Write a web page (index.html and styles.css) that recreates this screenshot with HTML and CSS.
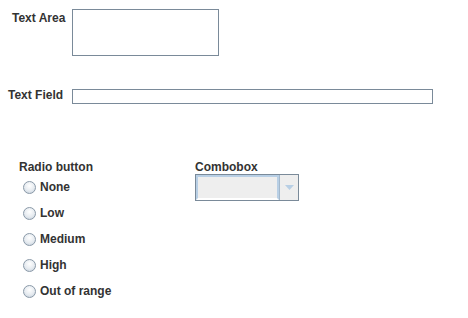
FILE: index.html
```html
<!DOCTYPE html>
<html lang="en">
<head>
    <meta charset="UTF-8">
    <title>Form Demo</title>
    <link rel="stylesheet" href="styles.css">
</head>
<body>
    <div class="form">
        <div class="row area-row">
            <label class="lbl">Text Area</label>
            <div class="textarea"></div>
        </div>

        <div class="row field-row">
            <label class="lbl">Text Field</label>
            <div class="textfield"></div>
        </div>

        <div class="groups">
            <div class="radio-group">
                <div class="group-title">Radio button</div>
                <label class="radio"><span class="dot"></span>None</label>
                <label class="radio"><span class="dot"></span>Low</label>
                <label class="radio"><span class="dot"></span>Medium</label>
                <label class="radio"><span class="dot"></span>High</label>
                <label class="radio"><span class="dot"></span>Out of range</label>
            </div>

            <div class="combo-group">
                <div class="group-title">Combobox</div>
                <div class="combo">
                    <div class="combo-field"></div>
                    <div class="combo-btn">
                        <svg width="9" height="5" viewBox="0 0 9 5">
                            <path d="M0 0h9L4.5 5z" fill="#b8cfe5" />
                        </svg>
                    </div>
                </div>
            </div>
        </div>
    </div>
</body>
</html>
```

FILE: styles.css
```css
* {
    margin: 0;
    padding: 0;
    box-sizing: border-box;
}

body {
    font-family: 'Liberation Sans', Arial, sans-serif;
    font-size: 12px;
    font-weight: bold;
    color: #333333;
    background: #ffffff;
}

.form {
    padding-top: 9px;
}

.row {
    display: flex;
}

.lbl {
    line-height: 14px;
}

.area-row .lbl {
    width: 72px;
    padding-left: 12px;
    padding-top: 2px;
}

.textarea {
    width: 147px;
    height: 47px;
    border: 1px solid #7a8a99;
    background: #fff;
}

.field-row {
    margin-top: 32px;
    align-items: center;
}

.field-row .lbl {
    width: 72px;
    padding-left: 8px;
    padding-bottom: 2px;
}

.textfield {
    width: 361px;
    height: 15px;
    border: 1px solid #7a8a99;
    background: #fff;
}

.groups {
    display: flex;
    margin-top: 54px;
}

.group-title {
    line-height: 14px;
    height: 16px;
    padding-top: 2px;
}

.radio-group {
    width: 195px;
    padding-left: 19px;
}

.radio {
    display: flex;
    align-items: center;
    height: 26px;
    padding-left: 4px;
}

.dot {
    width: 13px;
    height: 13px;
    border-radius: 50%;
    border: 1px solid #8a99a8;
    background: radial-gradient(circle at 50% 35%, #ffffff 0%, #e6ebf0 55%, #bfccd8 100%);
    margin-right: 4px;
}

.combo {
    display: flex;
    width: 104px;
    height: 27px;
    border: 1px solid #7a8a99;
}

.combo-field {
    flex: 1;
    background: #eeeeee;
    border: 2px solid #b8cfe5;
    border-bottom-color: #ffffff;
}

.combo-btn {
    width: 19px;
    background: #eeeeee;
    border-left: 1px solid #a3b8cc;
    display: flex;
    align-items: center;
    justify-content: center;
}
```
